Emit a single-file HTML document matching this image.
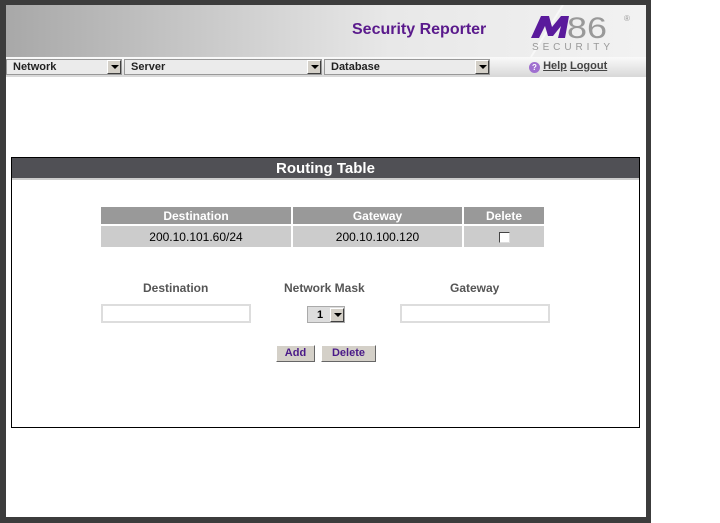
<!DOCTYPE html>
<html><head><meta charset="utf-8"><style>
*{margin:0;padding:0;box-sizing:border-box}
body{width:720px;height:523px;background:#fff;position:relative;overflow:hidden;font-family:"Liberation Sans",Arial,sans-serif}
.frame{position:absolute;left:0;top:0;width:651px;height:523px;background:#3c3c3c}
.inner{position:absolute;left:6px;top:5px;width:640px;height:512px;background:#fff}
.hdr{position:absolute;left:0;top:0;width:640px;height:52px;background:linear-gradient(90deg,#a8a8a8 0%,#c8c8c8 30%,#e8e8e8 60%,#f2f2f2 100%)}
.title{position:absolute;left:346px;top:16px;font-size:16px;font-weight:bold;color:#5a1a8c}
.nav{position:absolute;left:0;top:52px;width:640px;height:20px;background:linear-gradient(#fafafa,#d8d8d8)}
.sel{position:absolute;top:2px;height:16px;background:#ebebeb;border:1px solid #999;font-size:11px;font-weight:bold;color:#222;padding:1px 0 0 6px}
.arr{position:absolute;right:0;top:0;width:14px;height:14px;background:#d4d0c8;border:1px solid #fff;border-right-color:#404040;border-bottom-color:#404040}
.arr:after{content:"";position:absolute;left:3px;top:4px;border-left:4px solid transparent;border-right:4px solid transparent;border-top:4px solid #000}
.box{position:absolute;left:5px;top:152px;width:629px;height:271px;border:1px solid #000}
.bh{height:22px;background:#505055;color:#fff;font-weight:bold;font-size:15px;text-align:center;line-height:22px;border-bottom:2px solid #ccc}
table{position:absolute;border-collapse:collapse}
td{font-size:12px;text-align:center;height:22px}
.th td{background:#999;color:#fff;font-weight:bold;height:18px}
.lbl{position:absolute;font-size:12px;font-weight:bold;color:#555}
.inp{position:absolute;height:19px;border:2px solid #ddd;background:#fff}
.btn{position:absolute;top:340px;height:17px;background:#d4d0c8;border:1px solid #fff;border-right-color:#666;border-bottom-color:#666;font-size:11px;font-weight:bold;color:#4a1a88;text-align:center;line-height:14px}
</style></head><body>
<div class="frame"><div class="inner">
<div class="hdr">
<div class="title">Security Reporter</div>
<svg style="position:absolute;left:505px;top:0" width="135" height="52"><line x1="20" y1="52" x2="52" y2="0" stroke="#fff" stroke-width="2" opacity=".6"/>
<path d="M20 33 L30 11 L38 11 L41 22 L50 11 L58 11 L54 33 L47 33 L50 21 L42 31 L37 31 L34 21 L28 33Z" fill="#5a1a9c"/>
<text x="56" y="33" font-family="Liberation Sans" font-size="30" fill="#999" textLength="40" lengthAdjust="spacingAndGlyphs">86</text>
<text x="21" y="45" font-family="Liberation Sans" font-size="10" fill="#999" textLength="78">SECURITY</text>
<text x="113" y="16" font-size="8" fill="#999">®</text></svg>
</div>
<div class="nav">
<div class="sel" style="left:0;width:116px">Network<div class="arr"></div></div>
<div class="sel" style="left:118px;width:198px">Server<div class="arr"></div></div>
<div class="sel" style="left:318px;width:166px">Database<div class="arr"></div></div>
<div style="position:absolute;left:523px;top:3px;font-size:11px;font-weight:bold;color:#444"><span style="display:inline-block;width:11px;height:11px;border-radius:50%;background:#a070d0;color:#fff;font-size:8px;text-align:center;line-height:11px;vertical-align:-1px">?</span> <u>Help</u> <u>Logout</u></div>
</div>
<div class="box"><div class="bh">Routing Table</div></div>
<table style="left:95px;top:202px">
<tr class="th"><td style="width:191px;border-right:2px solid #fff">Destination</td><td style="width:171px;border-right:2px solid #fff">Gateway</td><td style="width:81px">Delete</td></tr>
<tr style="background:#ccc"><td style="border-right:2px solid #fff;border-top:2px solid #fff">200.10.101.60/24</td><td style="border-right:2px solid #fff;border-top:2px solid #fff">200.10.100.120</td><td style="border-top:2px solid #fff"><span style="display:inline-block;width:11px;height:11px;background:#fff;border:1px solid #444;border-right-color:#ddd;border-bottom-color:#ddd;vertical-align:middle"></span></td></tr>
</table>
<div class="lbl" style="left:137px;top:276px">Destination</div>
<div class="lbl" style="left:278px;top:276px">Network Mask</div>
<div class="lbl" style="left:444px;top:276px">Gateway</div>
<div class="inp" style="left:95px;top:299px;width:150px"></div>
<div class="inp" style="left:394px;top:299px;width:150px"></div>
<div style="position:absolute;left:301px;top:301px;width:38px;height:17px;background:#ddd;border:1px solid #aaa;font-size:11px;font-weight:bold;padding:2px 0 0 9px">1<div class="arr" style="top:1px"></div></div>
<div class="btn" style="left:270px;width:39px">Add</div>
<div class="btn" style="left:315px;width:55px">Delete</div>
</div></div>
</body></html>
